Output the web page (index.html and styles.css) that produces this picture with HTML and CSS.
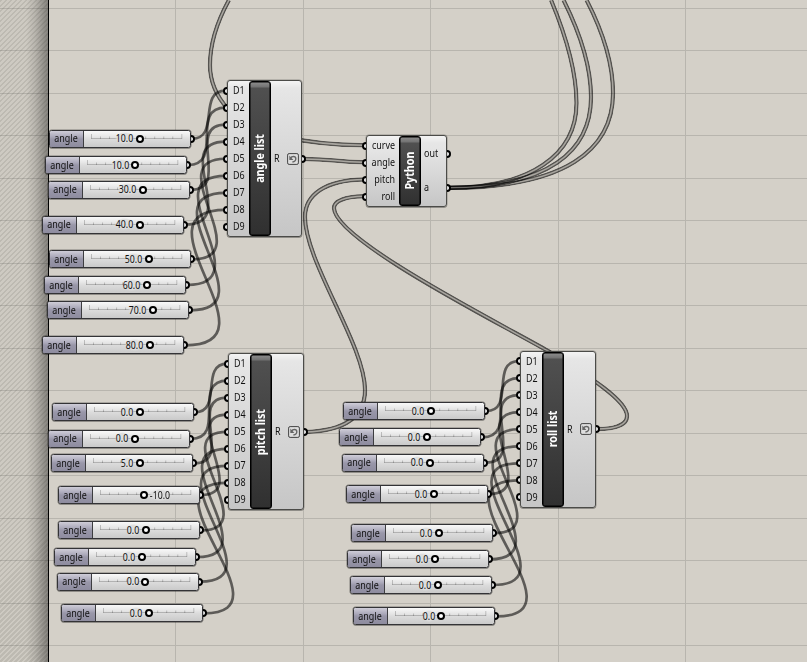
FILE: index.html
```html
<!DOCTYPE html>
<html lang="en">
<head>
<meta charset="utf-8">
<title>Node canvas</title>
<link rel="stylesheet" href="styles.css">
</head>
<body>
<main class="canvas">
  <svg class="grid" width="807" height="662" viewBox="0 0 807 662"></svg>
  <div class="margin"></div>
  <svg class="wires" width="807" height="662" viewBox="0 0 807 662"></svg>
</main>
<script src="canvas.js"></script>
</body>
</html>
```
FILE: styles.css
```css
* { box-sizing: border-box; }
body { margin: 0; overflow: hidden; }
.canvas {
  position: relative;
  width: 807px;
  height: 662px;
  overflow: hidden;
  background: #d4d0c8;
  font: 10.4px/12px "Noto Sans", "Open Sans", sans-serif;
  color: #111;
}
.grid, .wires, .margin { position: absolute; inset: 0; }
.grid path { stroke: #000; stroke-opacity: .13; shape-rendering: crispEdges; }
.margin {
  right: auto;
  width: 49px;
  border-right: 1px solid #000;
  background:
    linear-gradient(to right, transparent 26px, rgba(0,0,0,.1) 35px, rgba(0,0,0,.36) 48px),
    repeating-linear-gradient(135deg, rgba(90,90,80,.19) 0 1.6px, rgba(90,90,80,.05) 1.6px 3.54px);
}
.wires .single { fill: none; stroke: #000; stroke-opacity: .56; stroke-width: 2.7; }
.wires .double { fill: none; stroke: #000; stroke-opacity: .6; stroke-width: 4.5; }
.wires .shell { fill: none; stroke: #fff; stroke-width: 4.5; }
.wires .core { fill: none; stroke: #555; stroke-width: 1.5; }

.port {
  position: absolute;
  width: 8px;
  height: 8px;
  border: 2px solid #000;
  border-radius: 50%;
  background: #fff;
}

.slider {
  position: absolute;
  width: 142px;
  height: 18px;
}
.slider .port { right: -4px; top: 5px; }
.slider-body {
  position: relative;
  display: flex;
  height: 100%;
  overflow: hidden;
  border: 1px solid #333336;
  border-radius: 2.5px;
  background: linear-gradient(#f9f9f9, #e6e6e6 35%, #dcdcdc 50%, #cacaca);
  box-shadow: 0 0 0 .5px rgba(0,0,0,.4), 0 1px 0 rgba(0,0,0,.15);
}
.slider-name {
  width: 34px;
  padding-top: 1.5px;
  border-right: 1px solid #3d3d40;
  background: linear-gradient(#cfcdd8, #acaabb 35%, #9997a9 50%, #8e8c9f);
}
.slider-name b {
  display: block;
  padding-left: 5px;
  font-weight: 400;
  transform: scaleX(.86);
  transform-origin: left;
}
.slider-rail { position: absolute; left: 41px; top: 1px; }
.slider-value {
  position: absolute;
  top: 1.5px;
  white-space: nowrap;
  padding: 0 1px;
  background: radial-gradient(closest-side, rgba(221,221,221,.9) 75%, rgba(221,221,221,0));
  transform: scaleX(.84);
  transform-origin: left;
}
.slider-value.before { transform: scaleX(.84) translateX(-100%); }
.knob {
  position: absolute;
  top: 4px;
  width: 8px;
  height: 8px;
  margin-left: -4px;
  border: 2px solid #000;
  border-radius: 50%;
  background: #fff;
}

.node { position: absolute; }
.node-body {
  position: relative;
  display: flex;
  height: 100%;
  border: 1px solid #4b4b48;
  border-radius: 3px;
  background: linear-gradient(#f4f4f4, #e6e6e6 7px, #e4e4e4 15px, #c6c6c6);
  box-shadow: 0 0 0 .5px rgba(0,0,0,.3), 0 1px 0 rgba(0,0,0,.2);
}
.pins { display: flex; flex-direction: column; justify-content: center; }
.pins span {
  height: 17.03px;
  line-height: 16px;
  transform: scaleX(.86);
  transform-origin: left;
}
.pins.in { width: 21px; padding-left: 5px; }
.pins.out { flex: 1; padding-left: 3px; }
.plate {
  display: flex;
  align-items: center;
  justify-content: center;
  width: 22px;
  margin: 0;
  border: 1px solid #000;
  border-radius: 3px;
  color: #fff;
  font-size: 11.6px;
  font-weight: 700;
  background: linear-gradient(#8e8e8e 0, #727272 5px, #505050 6px, #303030);
  box-shadow: inset 0 0 0 .5px #000;
}
.plate span { writing-mode: vertical-rl; transform: rotate(180deg) scaleY(.92); white-space: nowrap; }
.list { width: 75.5px; height: 157px; }
.list .pins.out { flex-direction: row; align-items: center; justify-content: space-between; padding-right: 2.5px; }
.badge { display: block; }
.script { width: 81px; height: 72px; }
.script .pins.in { width: 32px; padding: 0 4px 0 0; text-align: right; }
.script .pins.in span { transform-origin: right; }
.script .pins.out span { height: 34px; line-height: 33px; }
.port-clip { position: absolute; width: 4px; height: 8px; overflow: hidden; }
.port-clip.left { left: -4px; }
.port-clip.right { right: -4px; }
.port-clip .port { top: 0; }
.port-clip.left .port { left: 0; }
.port-clip.right .port { right: 0; }
```
FILE: canvas.js
```js
const canvas = document.querySelector('.canvas');
const grid = document.querySelector('.grid');
const wires = document.querySelector('.wires');

let gridPath = '';
for (const x of [175, 303, 430, 558, 685]) gridPath += `M${x + 0.5},0V662`;
for (let i = 0; i < 16; i++) gridPath += `M0,${Math.floor(8 + i * 42.5) + 0.5}H807`;
grid.innerHTML = `<path fill="none" d="${gridPath}"/>`;

// Each slider: left, top, knob centre, value
const groups = [
  { name: 'angle list', x: 226.6, y: 80.3, sliders: [
    [49, 129.8, 139.5, '10.0'], [45, 156, 135.3, '10.0'], [47.5, 180.8, 142.7, '30.0'], [42.4, 215.5, 140.3, '40.0'],
    [49.3, 250.4, 149.3, '50.0'], [44.3, 276, 147, '60.0'], [47.3, 301.3, 153, '70.0'], [42.4, 336.3, 150.3, '80.0']] },
  { name: 'pitch list', x: 228.4, y: 353.3, sliders: [
    [52, 403.3, 139.7, '0.0'], [47.8, 429.8, 135.3, '0.0'], [51, 454.3, 140, '5.0'], [58.4, 486, 144, '-10.0'],
    [58.3, 521.4, 146.3, '0.0'], [54.3, 548, 142.3, '0.0'], [57.3, 572.7, 145.5, '0.0'], [61, 604.3, 148.7, '0.0']] },
  { name: 'roll list', x: 520, y: 350.8, sliders: [
    [343.3, 402, 431, '0.0'], [339.3, 428.3, 427, '0.0'], [342.3, 453.6, 430, '0.0'], [345.7, 485, 433.7, '0.0'],
    [351, 524.2, 438.7, '0.0'], [346.5, 550.4, 434.7, '0.0'], [350, 576, 438, '0.0'], [353.4, 607.3, 441.5, '0.0']] },
];

const doubles = [
  'M229,0 C217,22 210,45 210,65 C210,85 218,98 228,109 C250,135 310,145 364,145.3',
  'M304,159 C334,159 334,162 364,162.3',
  'M364,179.5 C325,180 305,195 305,217 C305,262 365,345 365,390 C365,420 340,431 305,432',
  'M364,196.3 C345,196.5 334,201 334,208 C334,240 503,325 548,351 C588,376 627,400 627,416 C627,426 612,429 597,429',
  'M449,187.8 C530,188 576.5,155 576.5,103 C576.5,70 566,36 551,0',
  'M449,187.8 C548,187 591,152 591,97 C591,66 580,33 563.5,0',
  'M449,187.8 C565,188 613,150 613,93 C613,63 603,32 586.5,0',
];

let wireMarkup = '';
doubles.forEach((d, i) => {
  wireMarkup += `<mask id="w${i}" maskUnits="userSpaceOnUse" x="0" y="0" width="807" height="662">
    <path class="shell" d="${d}"/><path class="core" d="${d}"/></mask>
    <path class="double" d="${d}" mask="url(#w${i})"/>`;
});

function clipPort(side, y) {
  return `<div class="port-clip ${side}" style="top:${y - 4}px"><i class="port"></i></div>`;
}

function add(cls, x, y, html) {
  const el = document.createElement('div');
  el.className = cls;
  el.style.left = x + 'px';
  el.style.top = y + 'px';
  el.innerHTML = html;
  canvas.append(el);
}

let ticks = '';
for (let i = 0; i <= 10; i++) ticks += `M${(0.5 + i * 9.03).toFixed(2)},${i % 10 ? 4.5 : 2} V7`;

for (const g of groups) {
  g.sliders.forEach(([x, y, knob, value], i) => {
    const x0 = x + 143, y0 = y + 9, x1 = g.x - 1, y1 = g.y + 10.3 + i * 17.04;
    const k = 0.84 * Math.hypot(x1 - x0, y1 - y0) - 21;
    wireMarkup += `<path class="single" d="M${x0},${y0} C${x0 + k},${y0} ${x1 - k},${y1} ${x1},${y1}"/>`;
    const after = value[0] === '-';
    const at = knob - x - 1 + (after ? 5 : -5.8);
    add('slider', x, y, `<i class="port"></i><div class="slider-body">
      <span class="slider-name"><b>angle</b></span>
      <svg class="slider-rail" width="92" height="10"><path d="${ticks} M0.5,6.5 H90.8" fill="none" stroke="#000" stroke-opacity=".2"/></svg>
      <span class="slider-value ${after ? '' : 'before'}" style="left:${at}px">${value}</span>
      <i class="knob" style="left:${knob - x - 1}px"></i></div>`);
  });

  let pins = '', ports = '';
  for (let i = 1; i <= 9; i++) {
    pins += `<span>D${i}</span>`;
    ports += clipPort('left', 10.3 + (i - 1) * 17.04);
  }
  add('node list', g.x, g.y, `${ports}${clipPort('right', 78.5)}<div class="node-body">
    <div class="pins in">${pins}</div>
    <div class="plate"><span>${g.name}</span></div>
    <div class="pins out"><span>R</span>
      <svg class="badge" width="12" height="12" viewBox="0 0 12 12">
        <rect x=".6" y=".6" width="10.8" height="10.8" rx="1.5" fill="#dedede" stroke="#444"/>
        <path d="M3.6 5.2C4.6 3 8.6 2.6 8.8 5.6C8.9 7.6 7.4 8.7 5.4 9" fill="none" stroke="#666" stroke-width="1.4"/>
        <path d="M2.3 2.6V7H6.4Z" fill="#666"/>
      </svg></div></div>`);
}

add('node script', 366, 135,
  [10.5, 27.5, 44.5, 61.5].map(y => clipPort('left', y)).join('') +
  [19, 53].map(y => clipPort('right', y)).join('') +
  `<div class="node-body">
    <div class="pins in"><span>curve</span><span>angle</span><span>pitch</span><span>roll</span></div>
    <div class="plate"><span>Python</span></div>
    <div class="pins out"><span>out</span><span>a</span></div></div>`);

wires.innerHTML = wireMarkup;
```
